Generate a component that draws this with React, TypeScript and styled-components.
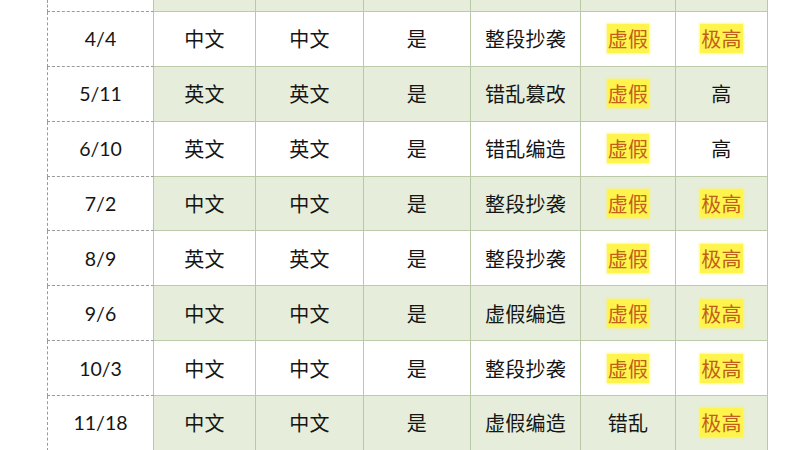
import React from "react";
import styled, { createGlobalStyle } from "styled-components";

const Global = createGlobalStyle`
  html, body { margin: 0; padding: 0; background: #ffffff; }
  body { overflow: hidden; }
`;

const Page = styled.div`
  width: 800px;
  height: 450px;
  overflow: hidden;
  padding-left: 47px;
  box-sizing: border-box;
  background: #fff;
`;

const Grid = styled.div`
  display: grid;
  grid-template-columns: 107px 102px 108px 107px 110px 95px 92px;
  grid-template-rows: 12px;
  grid-auto-rows: 54.86px;
  font-family: Lato, "Noto Sans CJK SC", sans-serif;
  font-size: 19.5px;
  color: #151515;
`;

const Cell = styled.div<{ $first?: boolean; $shaded?: boolean }>`
  display: flex;
  align-items: center;
  justify-content: center;
  box-sizing: border-box;
  background: ${(p) => (p.$first ? "#ffffff" : p.$shaded ? "#e6eedb" : "#ffffff")};
  border-right: 1px solid #b9c8a6;
  border-bottom: ${(p) => (p.$first ? "1px dashed #9a9a9a" : "1px solid #bccaa9")};
  border-left: ${(p) => (p.$first ? "1px dashed #9a9a9a" : "none")};
  white-space: nowrap;
`;

const Cjk = styled.span`
  font-family: "Noto Sans CJK SC", sans-serif;
  font-size: 20px;
  letter-spacing: 0.3px;
`;

const Mark = styled.span`
  font-family: "Noto Sans CJK SC", sans-serif;
  font-size: 20px;
  color: #bf5f1a;
  background: #fff34d;
  padding: 1px 1px 0;
  line-height: 28px;
  letter-spacing: 0.3px;
  box-shadow: 0 0 2px 1px rgba(255, 243, 77, 0.55);
`;

type Row = {
  no: string;
  a: string;
  b: string;
  c: string;
  d: string;
  e: string;
  eMark: boolean;
  f: string;
  fMark: boolean;
};

const rows: Row[] = [
  { no: "4/4", a: "中文", b: "中文", c: "是", d: "整段抄袭", e: "虚假", eMark: true, f: "极高", fMark: true },
  { no: "5/11", a: "英文", b: "英文", c: "是", d: "错乱篡改", e: "虚假", eMark: true, f: "高", fMark: false },
  { no: "6/10", a: "英文", b: "英文", c: "是", d: "错乱编造", e: "虚假", eMark: true, f: "高", fMark: false },
  { no: "7/2", a: "中文", b: "中文", c: "是", d: "整段抄袭", e: "虚假", eMark: true, f: "极高", fMark: true },
  { no: "8/9", a: "英文", b: "英文", c: "是", d: "整段抄袭", e: "虚假", eMark: true, f: "极高", fMark: true },
  { no: "9/6", a: "中文", b: "中文", c: "是", d: "虚假编造", e: "虚假", eMark: true, f: "极高", fMark: true },
  { no: "10/3", a: "中文", b: "中文", c: "是", d: "整段抄袭", e: "虚假", eMark: true, f: "极高", fMark: true },
  { no: "11/18", a: "中文", b: "中文", c: "是", d: "虚假编造", e: "错乱", eMark: false, f: "极高", fMark: true },
];

const Value = ({ text, mark }: { text: string; mark: boolean }) =>
  mark ? <Mark>{text}</Mark> : <Cjk>{text}</Cjk>;

export default function App() {
  return (
    <>
      <Global />
      <Page>
        <Grid>
          <Cell $first />
          {Array.from({ length: 6 }).map((_, i) => (
            <Cell key={i} $shaded />
          ))}
          {rows.map((r, i) => {
            const shaded = i % 2 === 1;
            return (
              <React.Fragment key={r.no}>
                <Cell $first>{r.no}</Cell>
                <Cell $shaded={shaded}><Cjk>{r.a}</Cjk></Cell>
                <Cell $shaded={shaded}><Cjk>{r.b}</Cjk></Cell>
                <Cell $shaded={shaded}><Cjk>{r.c}</Cjk></Cell>
                <Cell $shaded={shaded}><Cjk>{r.d}</Cjk></Cell>
                <Cell $shaded={shaded}><Value text={r.e} mark={r.eMark} /></Cell>
                <Cell $shaded={shaded}><Value text={r.f} mark={r.fMark} /></Cell>
              </React.Fragment>
            );
          })}
        </Grid>
      </Page>
    </>
  );
}
